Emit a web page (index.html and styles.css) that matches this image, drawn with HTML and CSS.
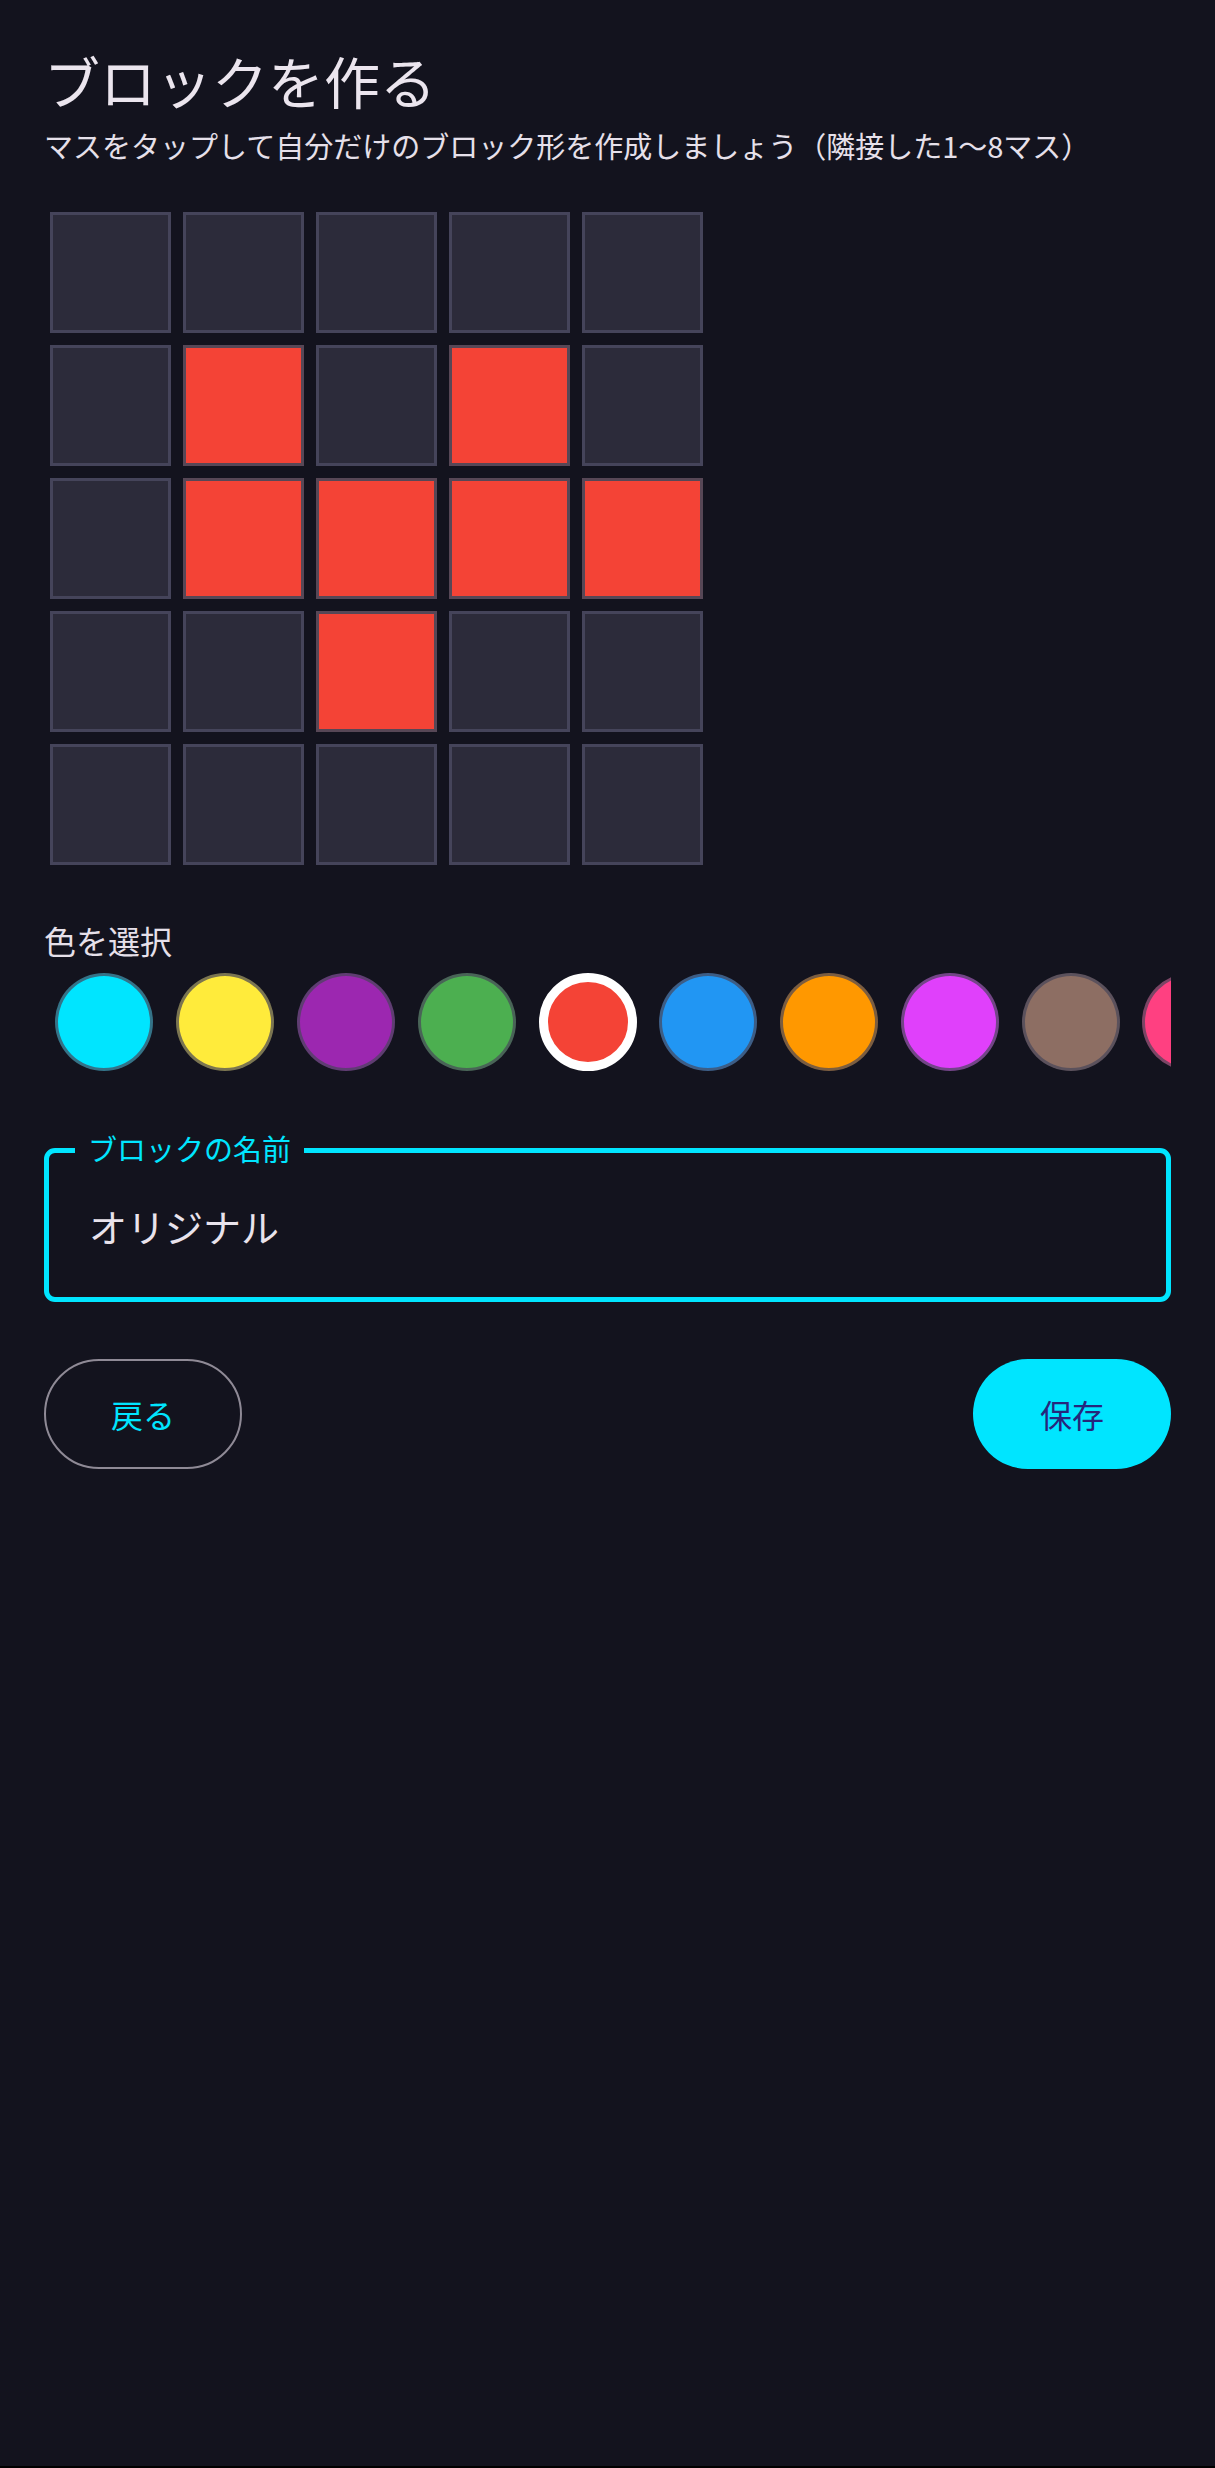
FILE: index.html
```html
<!DOCTYPE html>
<html lang="ja">
<head>
<meta charset="utf-8">
<title>ブロックを作る</title>
<link rel="stylesheet" href="styles.css">
</head>
<body>
<div class="page">
  <h1 class="title">ブロックを作る</h1>
  <p class="subtitle">マスをタップして自分だけのブロック形を作成しましょう（隣接した1〜8マス）</p>

  <div class="grid">
    <div class="cell"></div><div class="cell"></div><div class="cell"></div><div class="cell"></div><div class="cell"></div>
    <div class="cell"></div><div class="cell on"></div><div class="cell"></div><div class="cell on"></div><div class="cell"></div>
    <div class="cell"></div><div class="cell on"></div><div class="cell on"></div><div class="cell on"></div><div class="cell on"></div>
    <div class="cell"></div><div class="cell"></div><div class="cell on"></div><div class="cell"></div><div class="cell"></div>
    <div class="cell"></div><div class="cell"></div><div class="cell"></div><div class="cell"></div><div class="cell"></div>
  </div>

  <div class="section-label">色を選択</div>
  <div class="swatches">
    <div class="swatch c-cyan"></div>
    <div class="swatch c-yellow"></div>
    <div class="swatch c-purple"></div>
    <div class="swatch c-green"></div>
    <div class="swatch c-red selected"></div>
    <div class="swatch c-blue"></div>
    <div class="swatch c-orange"></div>
    <div class="swatch c-magenta"></div>
    <div class="swatch c-brown"></div>
    <div class="swatch c-pink"></div>
    <div class="swatch c-lime"></div>
    <div class="swatch c-teal"></div>
  </div>

  <div class="field">
    <span class="field-label">ブロックの名前</span>
    <span class="field-value">オリジナル</span>
  </div>

  <div class="actions">
    <button class="btn btn-outline">戻る</button>
    <button class="btn btn-filled">保存</button>
  </div>
</div>
</body>
</html>
```

FILE: styles.css
```css
html {
  background: #000;
}
body {
  margin: 0;
  font-family: "Noto Sans CJK JP", "Noto Sans", Roboto, sans-serif;
  color: #e6e0ea;
}
.page {
  min-height: 2466px;
  box-sizing: border-box;
  background: #13131e;
  padding: 48px 44px 0 44px;
}
.title {
  margin: 0;
  font-size: 56px;
  line-height: 64px;
  font-weight: 400;
  color: #ebe5ee;
}
.subtitle {
  margin: 15px 0 0 0;
  font-size: 29px;
  line-height: 36px;
  font-weight: 400;
}
.grid {
  margin: 49px 0 0 6px;
  display: grid;
  grid-template-columns: repeat(5, 121px);
  grid-auto-rows: 121px;
  gap: 12px;
}
.cell {
  box-sizing: border-box;
  border: 3px solid #45445a;
  background: #2c2b3a;
}
.cell.on {
  background: #f44336;
  border-color: #574756;
}
.section-label {
  margin-top: 55px;
  font-size: 32px;
  line-height: 40px;
}
.swatches {
  margin-top: 13px;
  display: flex;
  overflow: hidden;
  height: 98px;
}
.swatch {
  flex: 0 0 98px;
  height: 98px;
  box-sizing: border-box;
  margin: 0 11.4px;
  border-radius: 50%;
  border: 3px solid rgba(72, 70, 90, 0.72);
}
.swatch.selected {
  border: 9px solid #ffffff;
}
.c-cyan { background: #00e5ff; }
.c-yellow { background: #ffeb3b; }
.c-purple { background: #9c27b0; }
.c-green { background: #4caf50; }
.c-red { background: #f44336; }
.c-blue { background: #2196f3; }
.c-orange { background: #ff9800; }
.c-magenta { background: #e040fb; }
.c-brown { background: #8d6e63; }
.c-pink { background: #ff4081; }
.c-lime { background: #cddc39; }
.c-teal { background: #009688; }

.field {
  position: relative;
  margin-top: 77px;
  height: 154px;
  box-sizing: border-box;
  border: 5px solid #00e5ff;
  border-radius: 11px;
  display: flex;
  align-items: center;
  padding-left: 40px;
}
.field-label {
  position: absolute;
  top: -22px;
  left: 26px;
  padding: 0 13px;
  background: #13131e;
  color: #00e5ff;
  font-size: 29px;
  line-height: 34px;
}
.field-value {
  font-size: 38px;
  line-height: 48px;
  color: #e9e3ec;
  margin-top: 2px;
}
.actions {
  margin-top: 57px;
  display: flex;
  justify-content: space-between;
}
.btn {
  width: 198px;
  height: 110px;
  box-sizing: border-box;
  border-radius: 55px;
  font-family: "Noto Sans CJK JP", "Noto Sans", sans-serif;
  font-size: 32px;
  padding: 0;
}
.btn-outline {
  background: transparent;
  border: 2.5px solid #8f8a96;
  color: #00e5ff;
}
.btn-filled {
  background: #00e5ff;
  border: none;
  color: #26267c;
}
```
